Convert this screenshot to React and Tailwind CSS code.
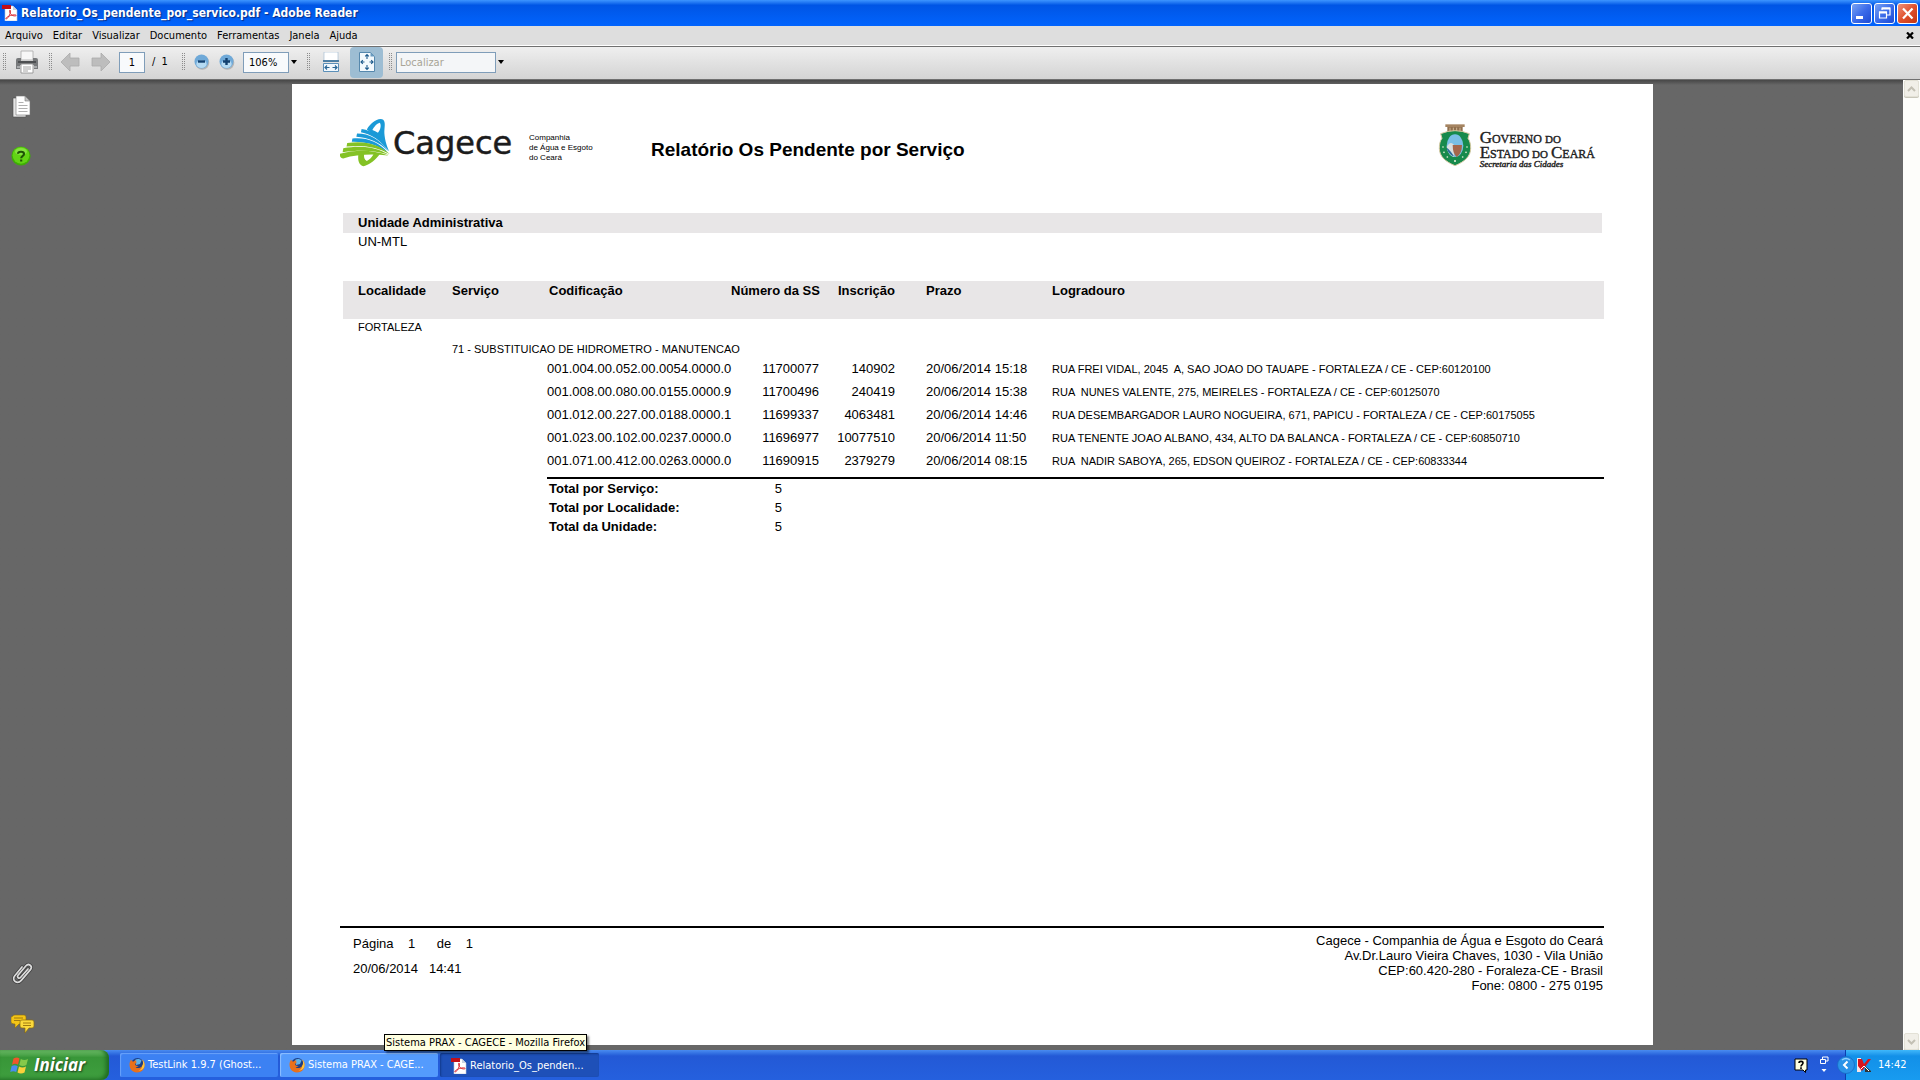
import React from "react";

const menus = ["Arquivo", "Editar", "Visualizar", "Documento", "Ferramentas", "Janela", "Ajuda"];

const rows = [
  ["001.004.00.052.00.0054.0000.0", "11700077", "140902", "20/06/2014 15:18", "RUA FREI VIDAL, 2045  A, SAO JOAO DO TAUAPE - FORTALEZA / CE - CEP:60120100"],
  ["001.008.00.080.00.0155.0000.9", "11700496", "240419", "20/06/2014 15:38", "RUA  NUNES VALENTE, 275, MEIRELES - FORTALEZA / CE - CEP:60125070"],
  ["001.012.00.227.00.0188.0000.1", "11699337", "4063481", "20/06/2014 14:46", "RUA DESEMBARGADOR LAURO NOGUEIRA, 671, PAPICU - FORTALEZA / CE - CEP:60175055"],
  ["001.023.00.102.00.0237.0000.0", "11696977", "10077510", "20/06/2014 11:50", "RUA TENENTE JOAO ALBANO, 434, ALTO DA BALANCA - FORTALEZA / CE - CEP:60850710"],
  ["001.071.00.412.00.0263.0000.0", "11690915", "2379279", "20/06/2014 08:15", "RUA  NADIR SABOYA, 265, EDSON QUEIROZ - FORTALEZA / CE - CEP:60833344"],
];

const totals = [
  ["Total por Serviço:", "5"],
  ["Total por Localidade:", "5"],
  ["Total da Unidade:", "5"],
];

function PdfIcon() {
  return (
    <svg className="h-4 w-4 shrink-0" viewBox="0 0 16 16">
      <path d="M3 1h8l4 4v11H3z" fill="#fff" stroke="#b9c4d6" strokeWidth=".6" />
      <path d="M11 1v4h4z" fill="#c9d2e0" />
      <path d="M0 0h9v4H0z" fill="#c1101a" />
      <path d="M4.500 14c2-1.500 4-5 4-8 0-1.300-1.200-1.200-1 .2.500 3 2.500 4.800 5.500 4.800 1.800 0 1.400-1.300-.6-1.200-2.600.1-5.400 1-7.700 2.600-1.300 1-.9 2.100-.2 1.600z" fill="none" stroke="#d8202a" strokeWidth=".9" />
    </svg>
  );
}

function FirefoxIcon() {
  return (
    <svg className="h-4 w-4 shrink-0" viewBox="0 0 16 16">
      <circle cx="8.500" cy="7.500" r="6.500" fill="#1d3f86" />
      <path d="M6 3c2-1.500 5-1.300 6.500.5L11 7 7 8z" fill="#5fb0e6" />
      <path d="M2 2.500C.5 5-.2 8.500 1.500 11.800 3.500 15.500 8 16.500 11.500 14.800c3.500-1.700 5-6 3.600-9.800-.4-1.100-1-1.900-1.800-2.600 1 2.400 1.200 5-.3 6.900-1.500 2-4.700 2.400-6.500.9 1.600.2 2.400-.6 3-1.200-1.800.1-3.400-.3-3.500-1.700 0-1 .9-1.100 1.700-.9-.1-1-.9-1.600-.3-2.800-1.700-.1-2.400.5-3.100 1.100C3 4 2.500 3.400 2 2.500z" fill="#e8701a" />
      <path d="M13.300 2.400c1 2.400 1.200 5-.3 6.900 0 2-1.500 3.700-3.500 4.300 3 .1 5.700-1.700 6-5 .2-2.500-.7-4.900-2.200-6.200z" fill="#fbc53a" />
    </svg>
  );
}

function Grip() {
  return (
    <svg className="h-[18px] w-1 shrink-0" viewBox="0 0 4 18" shapeRendering="crispEdges">
      <path d="M.5 0v18M2.500 0v18" stroke="#8c8c8c" strokeWidth="1" strokeDasharray="1 1" />
    </svg>
  );
}

function Caret() {
  return (
    <svg className="h-[4px] w-[6px]" viewBox="0 0 6 4">
      <path d="M0 0h6L3 4z" fill="#000" />
    </svg>
  );
}

function Arrow({ flip }) {
  return (
    <svg className="h-5 w-5" viewBox="0 0 20 20">
      <path
        d={flip ? "M19 10 10 1v5H1v8h9v5z" : "M1 10l9-9v5h9v8h-9v5z"}
        fill="#bdbdbd"
        stroke="#ababab"
        strokeWidth=".8"
      />
    </svg>
  );
}

function ZoomIcon({ plus }) {
  return (
    <svg className="h-4 w-4" viewBox="0 0 16 16">
      <circle cx="8.300" cy="8.700" r="7" fill="#8b8b8b" opacity=".5" />
      <circle cx="7.500" cy="7.500" r="7" fill="#6fa9d8" />
      <ellipse cx="7.500" cy="10" rx="5.200" ry="4" fill="#b5daf2" />
      <path d={plus ? "M4 7.500h7M7.500 4v7" : "M4 7.500h7"} stroke="#12406f" strokeWidth="2.400" />
    </svg>
  );
}

function TitleButton({ label, close, children }) {
  return (
    <button
      type="button"
      aria-label={label}
      className={
        close
          ? "flex h-[21px] w-[21px] items-center justify-center rounded-[3px] border border-white bg-linear-to-br from-[#ee9078] via-[#e0502c] to-[#c33512]"
          : "flex h-[21px] w-[21px] items-center justify-center rounded-[3px] border border-white bg-linear-to-br from-[#7ba2f2] via-[#3c6cea] to-[#1e4ad4]"
      }
    >
      <svg className="h-[19px] w-[19px]" viewBox="0 0 19 19">
        {children}
      </svg>
    </button>
  );
}

function TitleBar() {
  return (
    <header className="flex h-[26px] items-center bg-linear-to-b from-[#3d95ff] via-[#0055e5] via-20% to-[#0264fd] pr-[2px] pl-[2px]">
      <PdfIcon />
      <h1 className="ml-[3px] flex-1 font-['DejaVu_Sans_Condensed','DejaVu_Sans',sans-serif] text-[12px] font-bold text-white [text-shadow:1px_1px_1px_#0a2c80]">
        Relatorio_Os_pendente_por_servico.pdf - Adobe Reader
      </h1>
      <div className="flex gap-[2px]">
        <TitleButton label="Minimizar">
          <path d="M4 12h7v3H4z" fill="#fff" />
        </TitleButton>
        <TitleButton label="Restaurar">
          <path d="M7 6V4h8v7h-3M4.500 8h7v6h-7z" fill="none" stroke="#fff" strokeWidth="1.200" />
          <path d="M7 4.500h8M4 8.500h8" stroke="#fff" strokeWidth="2" />
        </TitleButton>
        <TitleButton label="Fechar" close>
          <path d="M5 4.500l9.500 10M14.500 4.500L5 14.500" stroke="#fff" strokeWidth="2.200" />
        </TitleButton>
      </div>
    </header>
  );
}

function MenuBar() {
  return (
    <nav className="flex h-[20px] items-center border-b border-white bg-[#dedede] pr-[6px] pl-[5px]">
      <div className="flex flex-1 gap-[10px]">
        {menus.map((m) => (
          <button key={m} type="button" className="leading-4">
            {m}
          </button>
        ))}
      </div>
      <button type="button" aria-label="Fechar documento">
        <svg className="h-[7px] w-[8px]" viewBox="0 0 8 7">
          <path d="M1 .5l6 6M7 .5l-6 6" stroke="#000" strokeWidth="2.200" />
        </svg>
      </button>
    </nav>
  );
}

function Toolbar() {
  return (
    <div className="flex h-[34px] items-center border-t border-b border-[#707070] bg-linear-to-b from-[#efefef] to-[#d4d4d4] pb-[2px] pl-[3px]">
      <Grip />
      <button type="button" aria-label="Imprimir" className="ml-[8px]">
        <svg className="h-6 w-6" viewBox="0 0 24 24">
          <path d="M6 1h12v9H6z" fill="#f7f7f7" stroke="#a8a8a8" strokeWidth=".8" />
          <path d="M1 10q0-2 2-2h3v3h12V8h3q2 0 2 2v9h-4v-4H5v4H1z" fill="#77797b" />
          <path d="M3 11h18v2H3z" fill="#4d4f51" />
          <path d="M2 16h3v2H2zM19 16h3v2h-3z" fill="#a9abad" />
          <path d="M6 14h12v9H6z" fill="#fff" stroke="#8b8b8b" strokeWidth=".8" />
          <path d="M8 17h8M8 19h8M8 21h5" stroke="#9a9a9a" strokeWidth=".9" />
        </svg>
      </button>
      <div className="ml-[10px] flex"><Grip /></div>
      <button type="button" aria-label="Página anterior" className="ml-[7px]"><Arrow /></button>
      <button type="button" aria-label="Próxima página" className="ml-[11px]"><Arrow flip /></button>
      <input
        aria-label="Página"
        defaultValue="1"
        className="ml-[8px] h-[21px] w-[26px] border border-[#7f9db9] bg-[#f8fafc] text-center"
      />
      <span className="ml-[7px] w-4 whitespace-pre">/  1</span>
      <div className="ml-[14px] flex"><Grip /></div>
      <button type="button" aria-label="Reduzir" className="ml-[8px]"><ZoomIcon /></button>
      <button type="button" aria-label="Ampliar" className="ml-[9px]"><ZoomIcon plus /></button>
      <input
        aria-label="Zoom"
        defaultValue="106%"
        className="ml-[8px] h-[21px] w-[46px] border border-[#7f9db9] bg-[#f8fafc] pl-[5px]"
      />
      <button type="button" aria-label="Níveis de zoom" className="ml-[2px] py-2"><Caret /></button>
      <div className="ml-[10px] flex"><Grip /></div>
      <button type="button" aria-label="Ajustar à largura" className="ml-[11px]">
        <svg className="h-5 w-[18px]" viewBox="0 0 18 20">
          <path d="M2 0h14v9H2z" fill="#fff" stroke="#9cb6cc" strokeWidth=".6" />
          <path d="M1 9h16" stroke="#2a6796" strokeWidth="1.600" />
          <path d="M1.500 11.500h15v8h-15z" fill="#f1f8fd" stroke="#5b8fb8" strokeWidth="1" />
          <path d="M3 15.500h4.500M10.500 15.500H15M5 13.500l-2 2 2 2M13 13.500l2 2-2 2" fill="none" stroke="#2a6796" strokeWidth="1.200" />
        </svg>
      </button>
      <button
        type="button"
        aria-label="Ajustar à página"
        className="ml-[10px] flex h-[31px] w-[33px] items-center justify-center rounded-[4px] bg-[#9dbdd3]"
      >
        <svg className="h-5 w-4" viewBox="0 0 16 20">
          <path d="M.5.500h11l4 4v15H.5z" fill="#f3f9fd" stroke="#5688ad" strokeWidth="1" />
          <path d="M11.500.500v4h4z" fill="#6b9dc2" />
          <path d="M8 2.500v4.500M8 13v4.500M2 10h3.500M10.500 10H14M6.200 4.300L8 2.500l1.800 1.800M6.200 15.700L8 17.500l1.800-1.800M3.800 8.200L2 10l1.800 1.800M12.200 8.200L14 10l-1.800 1.800" fill="none" stroke="#1f5b8c" strokeWidth="1.100" />
        </svg>
      </button>
      <div className="ml-[6px] flex"><Grip /></div>
      <input
        aria-label="Localizar"
        placeholder="Localizar"
        className="ml-[3px] h-[21px] w-[100px] border border-[#7f9db9] bg-[#f4f6f8] pl-[3px] placeholder:text-[#a8a496]"
      />
      <button type="button" aria-label="Opções de localização" className="ml-[2px] py-2"><Caret /></button>
    </div>
  );
}

function SidePane() {
  return (
    <aside className="flex w-[42px] shrink-0 flex-col items-start justify-between pt-[15px] pb-[11px] pl-[11px]">
      <div className="flex flex-col gap-[27px]">
        <button type="button" aria-label="Páginas">
          <svg className="h-6 w-6" viewBox="0 0 24 24">
            <path d="M2 3h13v19H2z" fill="#e6e6e6" stroke="#4a4a4a" strokeWidth=".6" />
            <path d="M5 1h9l5 5v14H5z" fill="#fff" stroke="#777" strokeWidth=".6" />
            <path d="M14 1v5h5z" fill="#c2c2c2" stroke="#777" strokeWidth=".6" />
            <path d="M7.500 7.500h5M7.500 10.500h9M7.500 13.500h9M7.500 16.500h9" stroke="#b0b0b0" strokeWidth="1" />
          </svg>
        </button>
        <button type="button" aria-label="Como fazer">
          <svg className="h-5 w-5" viewBox="0 0 20 20">
            <circle cx="10" cy="10" r="9.600" fill="#3fae06" />
            <circle cx="10" cy="9.300" r="8.400" fill="#62d414" />
            <ellipse cx="10" cy="5.500" rx="6" ry="3.600" fill="#9cec5c" opacity=".6" />
            <path d="M7 7.800C7 5.200 13 5 13 8c0 2-2.800 2-2.800 4.200M10.200 13.400v2" fill="none" stroke="#1e5206" strokeWidth="2.100" />
          </svg>
        </button>
      </div>
      <div className="flex flex-col gap-[29px]">
        <button type="button" aria-label="Anexos">
          <svg className="h-6 w-6" viewBox="0 0 24 24">
            <g fill="none" strokeLinecap="round">
              <path d="M17 8l-7.500 8.500c-1.500 1.700-4-.3-2.500-2.200l8-9.500c2.700-3 7 .3 4.600 3.600l-9.300 11C6.300 24 .3 19.300 3.600 15L11 6" stroke="#3c3c3c" strokeWidth="3.200" />
              <path d="M17 8l-7.500 8.500c-1.500 1.700-4-.3-2.500-2.200l8-9.500c2.700-3 7 .3 4.600 3.600l-9.300 11C6.300 24 .3 19.300 3.600 15L11 6" stroke="#dcdcdc" strokeWidth="1.700" />
            </g>
          </svg>
        </button>
        <button type="button" aria-label="Comentários">
          <svg className="h-5 w-6" viewBox="0 0 24 20">
            <path d="M2 2q0-1 2-1h9q2 0 2 2v5q0 2-2 2H8l-4 4V10Q0 10 0 8V3z" fill="#f3c417" stroke="#8a6b10" strokeWidth=".6" />
            <path d="M3 4h9M3 6.500h6" stroke="#a07b10" strokeWidth="1" />
            <path d="M11 6h10q2 0 2 2v4q0 2-2 2h-3l-4 5v-5h-3q-2 0-2-2V8q0-2 2-2z" fill="#fbd93c" stroke="#8a6b10" strokeWidth=".7" />
            <path d="M12 9h8M12 11.500h8" stroke="#a07b10" strokeWidth="1" />
          </svg>
        </button>
      </div>
    </aside>
  );
}

function CageceLogo() {
  return (
    <div className="flex h-[50px] w-[171px] items-center">
      <svg className="h-[50px] w-[53px] shrink-0" viewBox="0 0 162 150">
        <g fill="#1b9ad7">
          <path d="M82 34C92 16 108 3 124 2c14 0 14 14 12 30-2 14 2 42 14 68C126 74 104 50 82 34zM116 44c10-12 10-28 5-31-8 2-18 14-22 22 6 2 12 5 17 9z" fillRule="evenodd" />
          <path d="M66 32c34 4 62 28 82 66-24-32-52-50-84-56z" />
          <path d="M52 46c38 0 70 18 96 54-28-28-62-42-98-44z" />
          <path d="M38 61c42-4 80 9 108 43-32-24-68-34-110-33z" />
        </g>
        <g fill="#84c225">
          <path d="M22 75c52-8 96 2 130 34-38-22-80-29-132-23z" />
          <path d="M10 91c54-10 100-4 140 20-44-14-88-16-142-8z" />
          <path d="M0 108c48-13 98-13 148 5-50-5-96-4-138 9-8 0-12-8-10-14z" />
          <path d="M56 110c-2 20 2 32 16 36 18-4 38-20 50-38l-18-2c-6 12-14 20-22 24-8-4-10-12-8-22z" />
        </g>
      </svg>
      <span className="font-['DejaVu_Sans',sans-serif] text-[32px] leading-none text-[#1c1c1c] [-webkit-text-stroke:0.5px_#1c1c1c]">Cagece</span>
    </div>
  );
}

function StateLogo() {
  return (
    <div className="flex items-start gap-[8px]">
      <svg className="h-[44px] w-[34px] shrink-0" viewBox="0 0 102 132">
        <path d="M22 4h58v8H22z" fill="#a58461" />
        <path d="M28 12h46v16H28z" fill="#8f6f4e" />
        <path d="M36 14v14M46 14v14M56 14v14M66 14v14" stroke="#d1b694" strokeWidth="3" />
        <path d="M8 32q43-18 86 0l-4 14c6 8 8 18 8 30 0 24-18 40-47 52C22 116 4 100 4 76c0-12 2-22 8-30z" fill="#178a4c" stroke="#d6c9a2" strokeWidth="3" />
        <ellipse cx="51" cy="68" rx="25" ry="34" fill="#79bfe6" />
        <path d="M26 72q12-22 24-4l-2 34q-18-6-22-30z" fill="#d8dfe0" />
        <path d="M44 66h28q0 26-16 36-12-10-12-36z" fill="#a5674c" />
        <path d="M26 74q10 6 22 26l-6-2Q28 88 26 74z" fill="#2b6c9b" />
        <g fill="#eef5df">
          <circle cx="15" cy="72" r="2.500" /><circle cx="18" cy="88" r="2.500" /><circle cx="28" cy="102" r="2.500" />
          <circle cx="51" cy="114" r="3" /><circle cx="74" cy="102" r="2.500" /><circle cx="84" cy="88" r="2.500" />
          <circle cx="87" cy="72" r="2.500" />
        </g>
      </svg>
      <div className="pt-[6px] font-['Liberation_Serif',serif] text-[12px] leading-[14px] whitespace-nowrap text-[#222] [-webkit-text-stroke:0.4px_#222]">
        <p className="h-[15px]"><span className="text-[17px] leading-none">G</span>OVERNO <span className="text-[11px]">DO</span></p>
        <p className="h-[15px]"><span className="text-[17px] leading-none">E</span>STADO <span className="text-[11px]">DO</span> <span className="text-[17px] leading-none">C</span>EARÁ</p>
        <p className="text-[9px] leading-[10px] italic">Secretaria das Cidades</p>
      </div>
    </div>
  );
}

function ReportTable() {
  return (
    <table className="w-full table-fixed border-separate border-spacing-0 text-left">
      <colgroup>
        <col className="w-[109px]" />
        <col className="w-[95px]" />
        <col className="w-[184px]" />
        <col className="w-[88px]" />
        <col className="w-[76px]" />
        <col className="w-[157px]" />
        <col />
      </colgroup>
      <thead>
        <tr className="h-[38px] bg-[#e8e6e7] align-top whitespace-nowrap">
          <th className="pt-[2px] pl-[15px]">Localidade</th>
          <th className="pt-[2px]">Serviço</th>
          <th className="pt-[2px] pl-[2px]">Codificação</th>
          <th className="pt-[2px] text-right">Número da SS</th>
          <th className="pt-[2px] text-right">Inscrição</th>
          <th className="pt-[2px] pl-[31px]">Prazo</th>
          <th className="pt-[2px]">Logradouro</th>
        </tr>
      </thead>
      <tbody>
        <tr className="h-[16px] text-[11px] leading-4">
          <td className="pl-[15px]" colSpan={7}>FORTALEZA</td>
        </tr>
        <tr className="h-[22px] text-[11px] leading-4">
          <td />
          <td className="pt-[5px]" colSpan={6}>71 - SUBSTITUICAO DE HIDROMETRO - MANUTENCAO</td>
        </tr>
        {rows.map(([code, ss, insc, due, street]) => (
          <tr key={code} className="h-[23px]">
            <td />
            <td />
            <td>{code}</td>
            <td className="text-right">{ss}</td>
            <td className="text-right">{insc}</td>
            <td className="pl-[31px]">{due}</td>
            <td className="text-[11px] whitespace-pre">{street}</td>
          </tr>
        ))}
        <tr className="h-[7px]">
          <td colSpan={2} />
          <td colSpan={5} className="border-b-2 border-black" />
        </tr>
      </tbody>
      <tfoot>
        {totals.map(([label, value]) => (
          <tr key={label} className="h-[19px]">
            <td />
            <td />
            <th className="pl-[2px]">{label}</th>
            <td className="pr-[37px] text-right">{value}</td>
            <td colSpan={3} />
          </tr>
        ))}
      </tfoot>
    </table>
  );
}

function ReportPage() {
  return (
    <article className="mx-auto flex w-full max-w-[1361px] flex-col bg-white pr-[49px] pb-[52px] pl-[48px] font-['Liberation_Sans',Arial,sans-serif] text-[13px] leading-4 text-black">
      <div className="flex h-[84px] items-start pt-[34px]">
        <CageceLogo />
        <p className="mt-[15px] w-[140px] pl-[18px] text-[8px] leading-[10px] whitespace-nowrap">
          Companhia
          <br />
          de Água e Esgoto
          <br />
          do Ceará
        </p>
        <h2 className="mt-[20px] flex-1 text-[19px] leading-6 font-bold">Relatório Os Pendente por Serviço</h2>
        <div className="mt-[5px] pr-[9px]">
          <StateLogo />
        </div>
      </div>
      <section className="mt-[45px] pl-[3px]">
        <h3 className="mr-[2px] bg-[#e8e6e7] py-[2px] pl-[15px] font-bold">Unidade Administrativa</h3>
        <p className="mt-[1px] mb-[31px] pl-[15px]">UN-MTL</p>
        <ReportTable />
      </section>
      <footer className="mt-auto flex justify-between border-t-2 border-black pt-[5px]">
        <div className="pt-[3px] pl-[13px]">
          <p className="whitespace-pre">Página    1      de    1</p>
          <p className="mt-[9px] whitespace-pre">20/06/2014   14:41</p>
        </div>
        <address className="pr-[1px] text-right leading-[15px] not-italic">
          Cagece - Companhia de Água e Esgoto do Ceará
          <br />
          Av.Dr.Lauro Vieira Chaves, 1030 - Vila União
          <br />
          CEP:60.420-280 - Foraleza-CE - Brasil
          <br />
          Fone: 0800 - 275 0195
        </address>
      </footer>
    </article>
  );
}

function ScrollArrow({ label, d }) {
  return (
    <button type="button" aria-label={label} className="flex h-[17px] w-[15px] items-center justify-center rounded-[2px] border border-[#e3e1d6] bg-[#f1efe8] shadow-[0_1px_0_#c9c7ba]">
      <svg className="h-[6px] w-[9px]" viewBox="0 0 9 6">
        <path d={d} fill="none" stroke="#c3c0b4" strokeWidth="2" />
      </svg>
    </button>
  );
}

function Viewer() {
  return (
    <main className="flex min-h-0 flex-1 bg-[#676767]">
      <div className="flex flex-1 bg-linear-to-b from-[#474747] to-[#676767] to-[5px] pb-[5px]">
        <SidePane />
        <div className="flex flex-1 pt-[4px]">
          <ReportPage />
        </div>
      </div>
      <div className="flex w-[17px] flex-col items-center justify-between bg-[#fdfdfa]">
        <ScrollArrow label="Rolar para cima" d="M1 5l3.500-3.500L8 5" />
        <ScrollArrow label="Rolar para baixo" d="M1 1l3.500 3.500L8 1" />
      </div>
    </main>
  );
}

function Taskbar() {
  return (
    <footer className="flex h-[30px] items-stretch bg-linear-to-b from-[#4a8cf0] via-[#2359d6] via-20% to-[#2560de] text-white">
      <button
        type="button"
        className="flex w-[109px] items-center gap-[4px] rounded-r-[8px] bg-linear-to-b from-[#6fbf6a] via-[#389638] via-25% to-[#3f9f3f] pl-[10px] font-['Open_Sans',sans-serif] text-[17px] font-bold italic shadow-[inset_-3px_-1px_4px_#1f6a22] [text-shadow:1px_1px_2px_#1b3f1b]"
      >
        <svg className="h-[19px] w-[20px]" viewBox="0 0 20 19">
          <path d="M3.500 2.500q3.500-2 6 0L8 8.500q-3-1.800-6 .2z" fill="#f0562b" />
          <path d="M10.800 3q3.500 2 7.200 0l-1.600 6q-3.600 2-7.100 0z" fill="#86c94a" />
          <path d="M1.700 10q3-1.800 6 .2L6.200 16q-3-1.700-6 0z" fill="#4a8df0" />
          <path d="M9 10.500q3.500 2 7 0L14.500 16.500q-3.500 2-7 0z" fill="#fbd13b" />
        </svg>
        <span>Iniciar</span>
      </button>
      <div className="ml-[11px] flex flex-1 items-center gap-[2px]">
        <button type="button" className="flex h-6 w-[158px] items-center gap-[3px] rounded-[2px] bg-[#3c81f3] pl-[9px] shadow-[inset_1px_1px_1px_#6aa2fa]">
          <FirefoxIcon />
          <span>TestLink 1.9.7 (Ghost...</span>
        </button>
        <div className="relative">
          <button type="button" className="flex h-6 w-[158px] items-center gap-[3px] rounded-[2px] bg-[#549bfd] pl-[9px] shadow-[inset_1px_1px_1px_#8fc0ff]">
            <FirefoxIcon />
            <span>Sistema PRAX - CAGE...</span>
          </button>
          <div
            role="tooltip"
            className="absolute bottom-[26px] left-[104px] border border-black bg-[#ffffe1] px-[1px] leading-[15px] whitespace-nowrap text-black shadow-[2px_2px_2px_rgba(0,0,0,0.5)]"
          >
            Sistema PRAX - CAGECE - Mozilla Firefox
          </div>
        </div>
        <button type="button" className="flex h-6 w-[159px] items-center gap-[3px] rounded-[2px] bg-[#1e50b8] pt-[2px] pl-[11px] shadow-[inset_1px_1px_2px_#123a8c]">
          <PdfIcon />
          <span>Relatorio_Os_penden...</span>
        </button>
      </div>
      <div className="flex items-start gap-[11px] pt-[6px] pr-[16px]">
        <svg className="mt-[2px] h-[15px] w-[14px]" viewBox="0 0 14 15">
          <path d="M1 1h12v11h-1.500v2.500L9 12H1z" fill="#ffffe1" stroke="#000" strokeWidth="1" />
          <path d="M5 5c0-2.200 4-2.200 4 0 0 1.600-2 1.500-2 3.500M7 9.300V11" fill="none" stroke="#000" strokeWidth="1.600" />
        </svg>
        <svg className="h-[17px] w-[10px]" viewBox="0 0 10 17">
          <path d="M3.500 3V1H9v4H7M1.500 3.500h5v4h-5z" fill="none" stroke="#fff" strokeWidth="1" />
          <path d="M2.500 13h5L5 16z" fill="#fff" />
        </svg>
      </div>
      <div className="flex w-[75px] items-center border-l border-[#0b3fae] bg-linear-to-b from-[#3fb8fb] via-[#1290e8] via-20% to-[#189bf0]">
        <button type="button" aria-label="Mostrar ícones ocultos" className="-ml-[9px] flex">
          <svg className="h-[18px] w-[18px]" viewBox="0 0 18 18">
            <circle cx="9" cy="9" r="8.500" fill="#2a93e8" stroke="#1869c4" strokeWidth=".8" />
            <path d="M5 4q4-3 8 0" stroke="#8fd0ff" strokeWidth="1.500" fill="none" />
            <path d="M10.500 5.500L7 9l3.500 3.500" fill="none" stroke="#fff" strokeWidth="2" />
          </svg>
        </button>
        <svg className="ml-[1px] h-4 w-4" viewBox="0 0 16 16">
          <path d="M1 1h4v14H1z" fill="#f6e5e5" />
          <path d="M2 2h4l2 5 4-5h3l-6 8-3 4-4-5z" fill="#d8131d" />
          <path d="M9 9l6 5v1H9z" fill="#333" />
          <path d="M5 12l3-3 5 5" stroke="#fff" fill="none" />
        </svg>
        <time className="ml-[6px]">14:42</time>
      </div>
    </footer>
  );
}

export default function App() {
  return (
    <div className="flex h-screen flex-col overflow-hidden font-['DejaVu_Sans_Condensed','DejaVu_Sans',sans-serif] text-[11px] text-black">
      <TitleBar />
      <MenuBar />
      <Toolbar />
      <Viewer />
      <Taskbar />
    </div>
  );
}
